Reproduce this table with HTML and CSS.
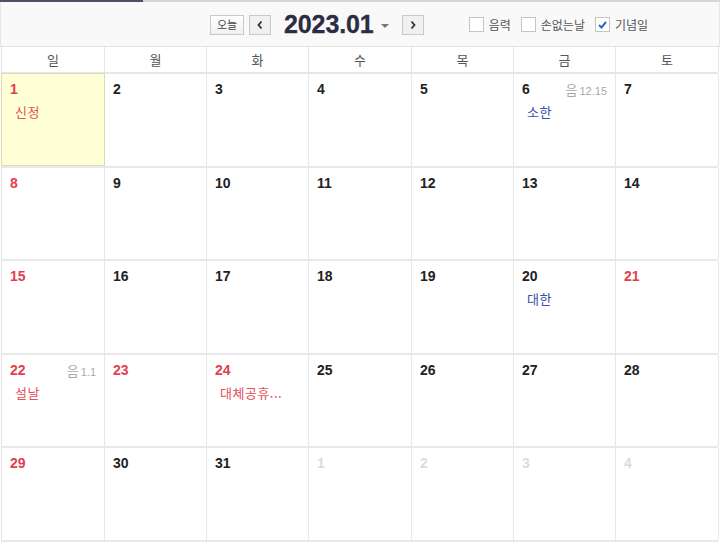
FILE: index.html
```html
<!DOCTYPE html>
<html lang="ko">
<head>
<meta charset="utf-8">
<link rel="stylesheet" href="styles.css">
</head>
<body>
<div class="topline"><span class="topline-dark"></span></div>
<header class="toolbar">
  <div class="nav">
    <button class="btn btn-today">오늘</button>
    <button class="btn btn-arrow"><svg width="8" height="10" viewBox="0 0 8 10"><path d="M5.5 1.5 L2.5 5 L5.5 8.5" fill="none" stroke="#333" stroke-width="1.8"/></svg></button>
    <span class="title">2023.01</span>
    <span class="caret"></span>
    <button class="btn btn-arrow btn-next"><svg width="8" height="10" viewBox="0 0 8 10"><path d="M2.5 1.5 L5.5 5 L2.5 8.5" fill="none" stroke="#333" stroke-width="1.8"/></svg></button>
  </div>
  <div class="opts">
    <label class="opt"><span class="box"></span>음력</label>
    <label class="opt"><span class="box"></span>손없는날</label>
    <label class="opt"><span class="box checked"><svg width="11" height="10" viewBox="0 0 11 10"><path d="M2 5 L4.5 7.5 L9 2" fill="none" stroke="#2e6bb8" stroke-width="2"/></svg></span>기념일</label>
  </div>
</header>
<div class="cal">
  <div class="weekdays">
    <div>일</div><div>월</div><div>화</div><div>수</div><div>목</div><div>금</div><div>토</div>
  </div>
  <div class="grid">
    <div class="week">
      <div class="day today"><span class="num red">1</span><div class="ev red">신정</div></div>
      <div class="day"><span class="num">2</span></div>
      <div class="day"><span class="num">3</span></div>
      <div class="day"><span class="num">4</span></div>
      <div class="day"><span class="num">5</span></div>
      <div class="day"><span class="num">6</span><span class="lunar"><span class="lk">음</span>12.15</span><div class="ev blue">소한</div></div>
      <div class="day"><span class="num">7</span></div>
    </div>
    <div class="week">
      <div class="day"><span class="num red">8</span></div>
      <div class="day"><span class="num">9</span></div>
      <div class="day"><span class="num">10</span></div>
      <div class="day"><span class="num">11</span></div>
      <div class="day"><span class="num">12</span></div>
      <div class="day"><span class="num">13</span></div>
      <div class="day"><span class="num">14</span></div>
    </div>
    <div class="week">
      <div class="day"><span class="num red">15</span></div>
      <div class="day"><span class="num">16</span></div>
      <div class="day"><span class="num">17</span></div>
      <div class="day"><span class="num">18</span></div>
      <div class="day"><span class="num">19</span></div>
      <div class="day"><span class="num">20</span><div class="ev blue">대한</div></div>
      <div class="day"><span class="num red">21</span></div>
    </div>
    <div class="week">
      <div class="day"><span class="num red">22</span><span class="lunar"><span class="lk">음</span>1.1</span><div class="ev red">설날</div></div>
      <div class="day"><span class="num red">23</span></div>
      <div class="day"><span class="num red">24</span><div class="ev red">대체공휴...</div></div>
      <div class="day"><span class="num">25</span></div>
      <div class="day"><span class="num">26</span></div>
      <div class="day"><span class="num">27</span></div>
      <div class="day"><span class="num">28</span></div>
    </div>
    <div class="week">
      <div class="day"><span class="num red">29</span></div>
      <div class="day"><span class="num">30</span></div>
      <div class="day"><span class="num">31</span></div>
      <div class="day"><span class="num dim">1</span></div>
      <div class="day"><span class="num dim">2</span></div>
      <div class="day"><span class="num dim">3</span></div>
      <div class="day"><span class="num dim">4</span></div>
    </div>
  </div>
</div>
</body>
</html>
```
FILE: styles.css
```css
* { box-sizing: border-box; }
html, body { margin: 0; padding: 0; background: #fff; }
body {
  width: 720px;
  height: 542px;
  overflow: hidden;
  font-family: "Noto Sans CJK KR", "Liberation Sans", sans-serif;
  color: #222;
}
.topline {
  height: 2px;
  background: #d4d6da;
  display: flex;
}
.topline-dark {
  width: 143px;
  height: 2px;
  background: #4b5263;
}
.toolbar {
  height: 45px;
  background: #f9f9f9;
  border-bottom: 1px solid #e3e3e3;
  border-left: 1px solid #e6e6e6;
  border-right: 1px solid #e6e6e6;
  display: flex;
  align-items: center;
  padding-left: 209px;
  padding-top: 1px;
}
.nav { display: flex; align-items: center; }
.btn {
  height: 20px;
  border: 1px solid #c9c9c9;
  background: linear-gradient(#fff, #f1f1f1);
  font-family: "Noto Sans CJK KR", sans-serif;
  font-size: 11px;
  color: #444;
  padding: 0;
  margin: 0;
  display: flex;
  align-items: center;
  justify-content: center;
  line-height: 1;
}
.btn-today { width: 34px; }
.btn-arrow { width: 22px; margin-left: 5px; background: #f0f0f0; }
.btn-next { margin-left: 13px; }
.title {
  font-family: "Liberation Sans", sans-serif;
  font-weight: bold;
  font-size: 25px;
  color: #2b2d42;
  margin-left: 13px;
  letter-spacing: -0.1px;
  -webkit-text-stroke: 0.3px #2b2d42;
}
.caret {
  width: 0; height: 0;
  border-left: 4px solid transparent;
  border-right: 4px solid transparent;
  border-top: 4px solid #777;
  margin-left: 7px;
  margin-top: 2px;
}
.opts { display: flex; align-items: center; margin-left: 45px; }
.opt {
  display: flex;
  align-items: center;
  font-size: 12px;
  color: #555;
  margin-right: 10px;
}
.box {
  width: 15px; height: 15px;
  border: 1px solid #c4c4c4;
  background: #fff;
  margin-right: 5px;
  display: flex; align-items: center; justify-content: center;
}
.cal {
  margin-left: 1px;
  width: 717px;
  border-left: 1px solid #e3e3e3;
}
.weekdays {
  display: grid;
  grid-template-columns: 103px 102px 102px 103px 102px 102px 103px;
  height: 27px;
  border-bottom: 2px solid #e6e6e6;
}
.weekdays div {
  border-right: 1px solid #e6e6e6;
  text-align: center;
  font-size: 13px;
  color: #555;
  line-height: 25px;
}
.week {
  display: grid;
  grid-template-columns: 103px 102px 102px 103px 102px 102px 103px;
  height: 93.6px;
  border-bottom: 2px solid #e8e8e8;
}
.day {
  border-right: 1px solid #e8e8e8;
  position: relative;
  padding: 7px 0 0 8px;
}
.day.today {
  background: #ffffd6;
  border: 1px solid #dcdcb8;
  margin-left: -1px;
  margin-top: -1px;
  padding: 7px 0 0 8px;
}
.num {
  font-family: "Liberation Sans", sans-serif;
  font-weight: bold;
  font-size: 14px;
  color: #222;
  line-height: 17px;
  display: block;
}
.num.red { color: #e2404e; }
.num.dim { color: #dcdcdc; }
.lunar {
  position: absolute;
  right: 8px;
  top: 6px;
  font-family: "Liberation Sans", sans-serif;
  font-size: 11px;
  color: #a8a8a8;
}
.lk { font-family: "Noto Sans CJK KR", sans-serif; font-size: 13px; margin-right: 2px; }
.ev {
  font-size: 13px;
  margin-top: 4px;
  margin-left: 5px;
  letter-spacing: 0.5px;
}
.ev.red { color: #e2505a; }
.ev.blue { color: #3a4ea5; }
```
